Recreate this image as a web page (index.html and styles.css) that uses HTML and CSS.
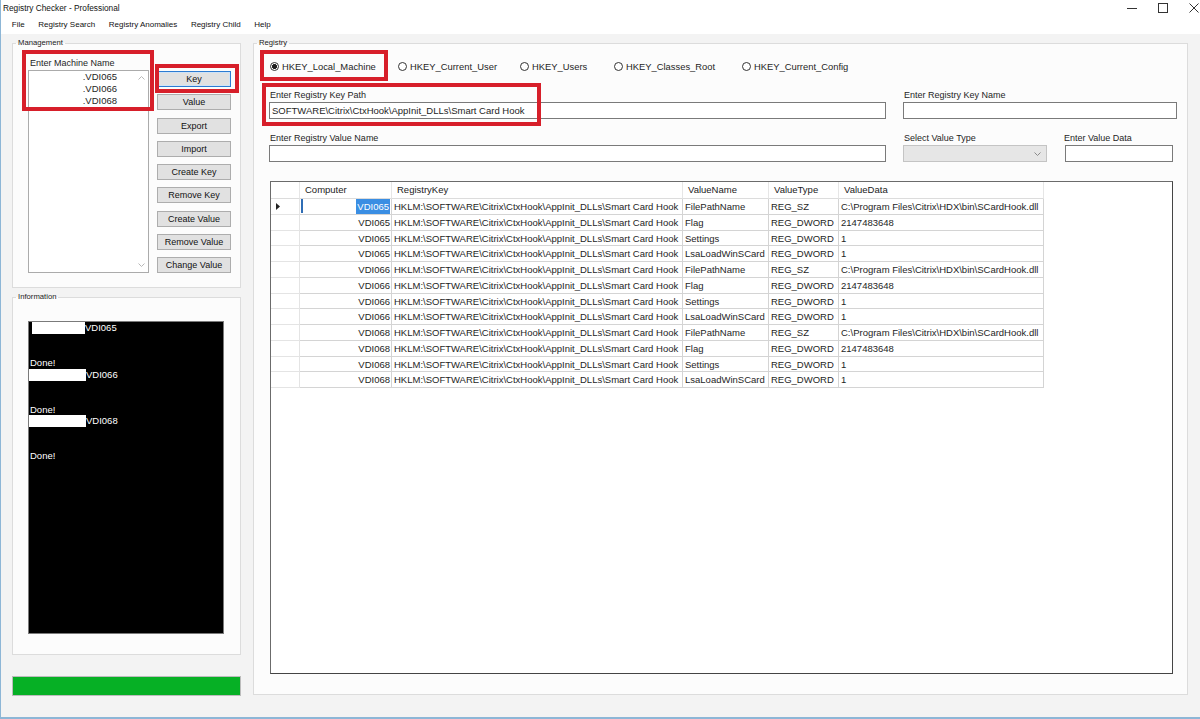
FILE: index.html
```html
<!DOCTYPE html>
<html lang="en">
<head>
    <meta charset="UTF-8">
    <title>Registry Checker - Professional</title>
    <link rel="stylesheet" href="styles.css">
</head>
<body>
<div class="window">
    <div class="titlebar">
        <span class="title">Registry Checker - Professional</span>
        <div class="controls">
            <svg width="10" height="10" viewBox="0 0 10 10"><path d="M0 5.5h10" stroke="#333" stroke-width="1"/></svg>
            <svg width="10" height="10" viewBox="0 0 10 10"><rect x="0.5" y="0.5" width="9" height="9" fill="none" stroke="#333" stroke-width="1"/></svg>
            <svg width="10" height="10" viewBox="0 0 10 10"><path d="M0.5 0.5l9 9M9.5 0.5l-9 9" stroke="#333" stroke-width="1"/></svg>
        </div>
    </div>

    <div class="menubar">
        <span>File</span>
        <span>Registry Search</span>
        <span>Registry Anomalies</span>
        <span>Registry Child</span>
        <span>Help</span>
    </div>

    <div class="content">
        <div class="left">
            <fieldset class="group mgmt">
                <legend>Management</legend>
                <div class="mgmt-body">
                    <div class="machine">
                        <div class="label">Enter Machine Name</div>
                        <div class="listbox">
                            <div class="items">
                                <div>.VDI065</div>
                                <div>.VDI066</div>
                                <div>.VDI068</div>
                            </div>
                            <div class="scroll">
                                <svg width="7" height="4" viewBox="0 0 7 4"><path d="M0.5 3.5l3-3 3 3" fill="none" stroke="#b8b8b8"/></svg>
                                <svg width="7" height="4" viewBox="0 0 7 4"><path d="M0.5 0.5l3 3 3-3" fill="none" stroke="#b8b8b8"/></svg>
                            </div>
                        </div>
                    </div>
                    <div class="buttons">
                        <button class="btn focus">Key</button>
                        <button class="btn">Value</button>
                        <button class="btn">Export</button>
                        <button class="btn">Import</button>
                        <button class="btn">Create Key</button>
                        <button class="btn">Remove Key</button>
                        <button class="btn">Create Value</button>
                        <button class="btn">Remove Value</button>
                        <button class="btn">Change Value</button>
                    </div>
                </div>
            </fieldset>

            <fieldset class="group info">
                <legend>Information</legend>
                <div class="info-body">
                    <div class="console">
                        <div><span class="redact first"></span>VDI065</div>
                        <div>&nbsp;</div>
                        <div>&nbsp;</div>
                        <div>Done!</div>
                        <div><span class="redact"></span>VDI066</div>
                        <div>&nbsp;</div>
                        <div>&nbsp;</div>
                        <div>Done!</div>
                        <div><span class="redact"></span>VDI068</div>
                        <div>&nbsp;</div>
                        <div>&nbsp;</div>
                        <div>Done!</div>
                    </div>
                </div>
            </fieldset>

            <div class="progress"></div>
        </div>

        <fieldset class="group registry">
            <legend>Registry</legend>
            <div class="registry-body">
                <div class="hives">
                    <label class="hive w1"><span class="radio on"></span>HKEY_Local_Machine</label>
                    <label class="hive w2"><span class="radio"></span>HKEY_Current_User</label>
                    <label class="hive w3"><span class="radio"></span>HKEY_Users</label>
                    <label class="hive w4"><span class="radio"></span>HKEY_Classes_Root</label>
                    <label class="hive"><span class="radio"></span>HKEY_Current_Config</label>
                </div>

                <div class="fields row2">
                    <div class="field wide">
                        <div class="label">Enter Registry Key Path</div>
                        <div class="input">SOFTWARE\Citrix\CtxHook\AppInit_DLLs\Smart Card Hook</div>
                    </div>
                    <div class="field keyname">
                        <div class="label">Enter Registry Key Name</div>
                        <div class="input"></div>
                    </div>
                </div>

                <div class="fields row3">
                    <div class="field wide">
                        <div class="label">Enter Registry Value Name</div>
                        <div class="input"></div>
                    </div>
                    <div class="field vtype">
                        <div class="label">Select Value Type</div>
                        <div class="input select">
                            <svg width="7" height="4" viewBox="0 0 7 4"><path d="M0.5 0.5l3 3 3-3" fill="none" stroke="#8a8a8a"/></svg>
                        </div>
                    </div>
                    <div class="field vdata">
                        <div class="label">Enter Value Data</div>
                        <div class="input"></div>
                    </div>
                </div>

                <div class="grid">
                    <div class="table">
                        <div class="h"></div>
                        <div class="h">Computer</div>
                        <div class="h">RegistryKey</div>
                        <div class="h">ValueName</div>
                        <div class="h">ValueType</div>
                        <div class="h">ValueData</div>

                        <div class="c rh"><svg width="4" height="7" viewBox="0 0 4 7"><path d="M0 0l4 3.5-4 3.5z" fill="#222"/></svg></div>
                        <div class="c pc edit"><span class="caret"></span><span class="sel">VDI065</span></div>
                        <div class="c">HKLM:\SOFTWARE\Citrix\CtxHook\AppInit_DLLs\Smart Card Hook</div>
                        <div class="c">FilePathName</div>
                        <div class="c">REG_SZ</div>
                        <div class="c">C:\Program Files\Citrix\HDX\bin\SCardHook.dll</div>

                        <div class="c rh"></div>
                        <div class="c pc">VDI065</div>
                        <div class="c">HKLM:\SOFTWARE\Citrix\CtxHook\AppInit_DLLs\Smart Card Hook</div>
                        <div class="c">Flag</div>
                        <div class="c">REG_DWORD</div>
                        <div class="c">2147483648</div>

                        <div class="c rh"></div>
                        <div class="c pc">VDI065</div>
                        <div class="c">HKLM:\SOFTWARE\Citrix\CtxHook\AppInit_DLLs\Smart Card Hook</div>
                        <div class="c">Settings</div>
                        <div class="c">REG_DWORD</div>
                        <div class="c">1</div>

                        <div class="c rh"></div>
                        <div class="c pc">VDI065</div>
                        <div class="c">HKLM:\SOFTWARE\Citrix\CtxHook\AppInit_DLLs\Smart Card Hook</div>
                        <div class="c">LsaLoadWinSCard</div>
                        <div class="c">REG_DWORD</div>
                        <div class="c">1</div>

                        <div class="c rh"></div>
                        <div class="c pc">VDI066</div>
                        <div class="c">HKLM:\SOFTWARE\Citrix\CtxHook\AppInit_DLLs\Smart Card Hook</div>
                        <div class="c">FilePathName</div>
                        <div class="c">REG_SZ</div>
                        <div class="c">C:\Program Files\Citrix\HDX\bin\SCardHook.dll</div>

                        <div class="c rh"></div>
                        <div class="c pc">VDI066</div>
                        <div class="c">HKLM:\SOFTWARE\Citrix\CtxHook\AppInit_DLLs\Smart Card Hook</div>
                        <div class="c">Flag</div>
                        <div class="c">REG_DWORD</div>
                        <div class="c">2147483648</div>

                        <div class="c rh"></div>
                        <div class="c pc">VDI066</div>
                        <div class="c">HKLM:\SOFTWARE\Citrix\CtxHook\AppInit_DLLs\Smart Card Hook</div>
                        <div class="c">Settings</div>
                        <div class="c">REG_DWORD</div>
                        <div class="c">1</div>

                        <div class="c rh"></div>
                        <div class="c pc">VDI066</div>
                        <div class="c">HKLM:\SOFTWARE\Citrix\CtxHook\AppInit_DLLs\Smart Card Hook</div>
                        <div class="c">LsaLoadWinSCard</div>
                        <div class="c">REG_DWORD</div>
                        <div class="c">1</div>

                        <div class="c rh"></div>
                        <div class="c pc">VDI068</div>
                        <div class="c">HKLM:\SOFTWARE\Citrix\CtxHook\AppInit_DLLs\Smart Card Hook</div>
                        <div class="c">FilePathName</div>
                        <div class="c">REG_SZ</div>
                        <div class="c">C:\Program Files\Citrix\HDX\bin\SCardHook.dll</div>

                        <div class="c rh"></div>
                        <div class="c pc">VDI068</div>
                        <div class="c">HKLM:\SOFTWARE\Citrix\CtxHook\AppInit_DLLs\Smart Card Hook</div>
                        <div class="c">Flag</div>
                        <div class="c">REG_DWORD</div>
                        <div class="c">2147483648</div>

                        <div class="c rh"></div>
                        <div class="c pc">VDI068</div>
                        <div class="c">HKLM:\SOFTWARE\Citrix\CtxHook\AppInit_DLLs\Smart Card Hook</div>
                        <div class="c">Settings</div>
                        <div class="c">REG_DWORD</div>
                        <div class="c">1</div>

                        <div class="c rh"></div>
                        <div class="c pc">VDI068</div>
                        <div class="c">HKLM:\SOFTWARE\Citrix\CtxHook\AppInit_DLLs\Smart Card Hook</div>
                        <div class="c">LsaLoadWinSCard</div>
                        <div class="c">REG_DWORD</div>
                        <div class="c">1</div>
                    </div>
                </div>
            </div>
        </fieldset>
    </div>

    <!-- red annotation boxes drawn over the form -->
    <div class="mark mark-machine"></div>
    <div class="mark mark-key"></div>
    <div class="mark mark-hive"></div>
    <div class="mark mark-path"></div>
</div>
</body>
</html>
```

FILE: styles.css
```css
* { margin: 0; padding: 0; box-sizing: border-box; }

body {
    font-family: "Liberation Sans", Arial, sans-serif;
    color: #1e1e1e;
    background: #f3f3f3;
}

.window {
    position: relative;
    width: 1200px;
    height: 719px;
    background: #f3f3f3;
    border-left: 1px solid #8db6d6;
    border-bottom: 2px solid #8db6d6;
    overflow: hidden;
}

.titlebar {
    height: 15px;
    background: #fff;
    display: flex;
    align-items: center;
    justify-content: space-between;
    padding-left: 2px;
}

.title {
    font-size: 8.3px;
    color: #111;
}

.controls {
    display: flex;
    gap: 21px;
    padding-right: 1px;
    margin-top: 1px;
}

.menubar {
    height: 19px;
    background: #fff;
    display: flex;
    align-items: center;
    padding-left: 4px;
    font-size: 8px;
    color: #111;
}

.menubar span {
    padding: 0 6.8px;
}

.content {
    display: flex;
    gap: 12px;
    padding: 4px 0 0 11px;
}

.left {
    width: 229px;
    display: flex;
    flex-direction: column;
}

.group {
    border: 1px solid #dcdcdc;
    background: #fcfcfc;
    min-width: 0;
}

.group legend {
    font-size: 7.7px;
    line-height: 10px;
    padding: 0 2px;
    margin-left: 3px;
    color: #222;
}

.mgmt { height: 250px; }

.mgmt-body {
    display: flex;
    padding: 9px 0 0 15px;
}

.machine { width: 121px; }

.label {
    font-size: 9px;
    line-height: 13px;
    padding-left: 2px;
    white-space: nowrap;
}

.listbox {
    height: 203px;
    background: #fff;
    border: 1px solid #ababab;
    display: flex;
}

.items {
    flex: 1;
    text-align: right;
    padding-right: 14px;
    font-size: 9.5px;
    line-height: 12px;
}

.scroll {
    width: 17px;
    display: flex;
    flex-direction: column;
    justify-content: space-between;
    align-items: center;
    padding: 5px 0 5px 3px;
}

.buttons {
    width: 74px;
    margin: 14px 0 0 8px;
    display: flex;
    flex-direction: column;
    gap: 7.25px;
}

.btn {
    height: 16px;
    font-family: "Liberation Sans", Arial, sans-serif;
    font-size: 9px;
    line-height: 14px;
    color: #111;
    background: #e1e1e1;
    border: 1px solid #adadad;
}

.btn.focus {
    border-color: #2d7bd1;
    box-shadow: inset 0 0 0 1px #cfe3f7;
}

.info {
    margin-top: 4px;
    height: 363px;
}

.info-body {
    padding: 19px 0 0 15px;
}

.console {
    width: 196px;
    height: 313px;
    background: #000;
    border: 1px solid #7a7a7a;
    color: #fff;
    font-size: 9.5px;
    line-height: 11.5px;
    padding-left: 1px;
}

.redact {
    display: inline-block;
    vertical-align: top;
    width: 57px;
    height: 12px;
    background: #fff;
    margin-left: -1px;
}

.redact.first {
    width: 53px;
    margin-left: 2px;
}

.progress {
    margin-top: 21px;
    height: 20px;
    background: #06b025;
    border: 1px solid #bcbcbc;
}

.registry {
    width: 935px;
    height: 657px;
}

.registry-body {
    padding: 12px 0 0 15px;
}

.hives {
    display: flex;
    align-items: center;
    height: 12px;
    padding-left: 1px;
    font-size: 9.4px;
}

.hive {
    display: flex;
    align-items: center;
    gap: 3px;
    white-space: nowrap;
}

.hive.w1 { width: 128px; }
.hive.w2 { width: 122px; }
.hive.w3 { width: 94px; }
.hive.w4 { width: 128px; }

.radio {
    width: 9px;
    height: 9px;
    border: 1px solid #333;
    border-radius: 50%;
    background: #fff;
}

.radio.on {
    background: radial-gradient(circle, #1e1e1e 0 2.2px, #fff 2.7px);
}

.fields {
    display: flex;
    gap: 17px;
}

.row2 { margin-top: 17px; }
.row3 { margin-top: 13px; }

.field .label { padding-left: 1px; }

.wide { width: 617px; }
.keyname { width: 274px; }
.vtype { width: 144px; }
.vdata { width: 108px; margin-left: 1px; }
.vdata .label { margin-left: -2px; }

.input {
    height: 17px;
    background: #fff;
    border: 1px solid #7a7a7a;
    font-size: 9.5px;
    line-height: 15px;
    padding-left: 2px;
    white-space: nowrap;
    overflow: hidden;
}

.input.select {
    background: #e6e6e6;
    border-color: #c4c4c4;
    display: flex;
    align-items: center;
    justify-content: flex-end;
    padding-right: 5px;
}

.grid {
    margin: 19px 0 0 1px;
    width: 903px;
    height: 493px;
    background: #fff;
    border: 1px solid #6b6b6b;
    border-right-color: #444;
    border-bottom-color: #444;
}

.table {
    display: grid;
    grid-template-columns: 29px 92px 291px 86px 70px 205px;
    grid-template-rows: 17px repeat(12, 15.75px);
    width: 773px;
}

.h, .c {
    font-size: 9.5px;
    white-space: nowrap;
    overflow: hidden;
}

.h {
    line-height: 16px;
    padding-left: 5px;
    border-right: 1px solid #e6e6e6;
    border-bottom: 1px solid #dcdcdc;
    color: #222;
}

.c {
    line-height: 15px;
    padding: 0 2px;
    border-right: 1px solid #d4d4d4;
    border-bottom: 1px solid #d4d4d4;
}

.c.rh {
    display: flex;
    align-items: center;
    padding-left: 5px;
    border-bottom-color: #e4e4e4;
    border-right-color: #e4e4e4;
}

.c.pc {
    text-align: right;
    padding-right: 1px;
}

.c.edit {
    display: flex;
    justify-content: space-between;
    align-items: center;
    padding-left: 1px;
}

.caret {
    width: 2px;
    height: 14px;
    background: #2f6db5;
}

.sel {
    background: #3a8ee3;
    color: #fff;
    padding: 0 1px;
}

.mark {
    position: absolute;
    border: 4px solid #d71f2a;
}

.mark-machine { left: 21px; top: 50px; width: 132px; height: 61px; }
.mark-key { left: 154px; top: 64px; width: 84px; height: 29px; }
.mark-hive { left: 259px; top: 50px; width: 128px; height: 31px; }
.mark-path { left: 261px; top: 83px; width: 279px; height: 43px; }
```
